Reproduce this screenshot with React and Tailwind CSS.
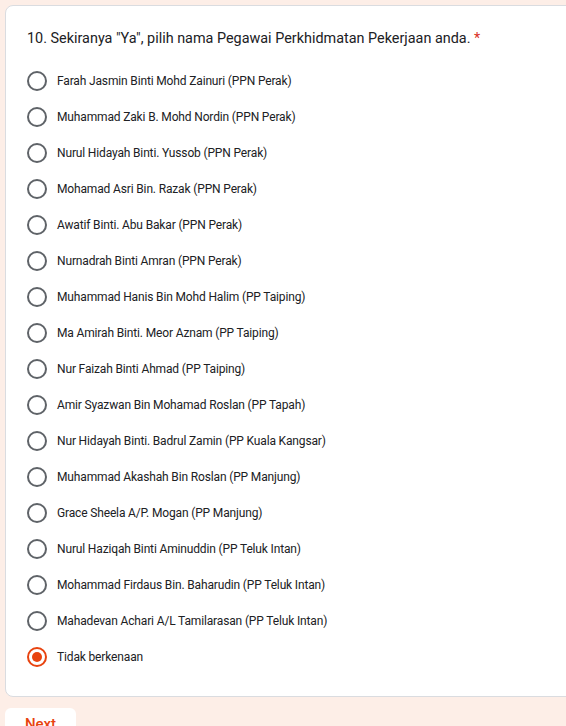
const options = [
  "Farah Jasmin Binti Mohd Zainuri (PPN Perak)",
  "Muhammad Zaki B. Mohd Nordin (PPN Perak)",
  "Nurul Hidayah Binti. Yussob (PPN Perak)",
  "Mohamad Asri Bin. Razak (PPN Perak)",
  "Awatif Binti. Abu Bakar (PPN Perak)",
  "Nurnadrah Binti Amran (PPN Perak)",
  "Muhammad Hanis Bin Mohd Halim (PP Taiping)",
  "Ma Amirah Binti. Meor Aznam (PP Taiping)",
  "Nur Faizah Binti Ahmad (PP Taiping)",
  "Amir Syazwan Bin Mohamad Roslan (PP Tapah)",
  "Nur Hidayah Binti. Badrul Zamin (PP Kuala Kangsar)",
  "Muhammad Akashah Bin Roslan (PP Manjung)",
  "Grace Sheela A/P. Mogan (PP Manjung)",
  "Nurul Haziqah Binti Aminuddin (PP Teluk Intan)",
  "Mohammad Firdaus Bin. Baharudin (PP Teluk Intan)",
  "Mahadevan Achari A/L Tamilarasan (PP Teluk Intan)",
  "Tidak berkenaan",
];

const App = () => {
  const selected = "Tidak berkenaan";
  return (
    <div className="w-[566px] h-[726px] overflow-hidden bg-[#fdeee7] pt-[5px] pl-[5px] font-['Roboto',sans-serif] text-[#202124]">
      <div className="w-[640px] bg-white rounded-lg border border-[#dadce0] pl-[21px] pt-[23px] pb-[21px]">
        <p className="text-[14.4px] leading-5">
          10. Sekiranya "Ya", pilih nama Pegawai Perkhidmatan Pekerjaan anda.{" "}
          <span className="text-[#d93025]">*</span>
        </p>
        <div className="mt-[14px] flex flex-col">
          {options.map((name) => (
            <div key={name} className="flex items-center h-9">
              {name === selected ? (
                <span className="w-5 h-5 rounded-full border-2 border-[#e8430f] flex items-center justify-center">
                  <span className="w-2.5 h-2.5 rounded-full bg-[#e8430f]"></span>
                </span>
              ) : (
                <span className="w-5 h-5 rounded-full border-2 border-[#5f6368]"></span>
              )}
              <span className="ml-[10px] text-[12px] tracking-[-0.15px]">{name}</span>
            </div>
          ))}
        </div>
      </div>
      <div className="mt-[11px] w-[71px] h-10 bg-white rounded-md flex justify-center pt-[6px] text-[#e8430f] text-[15px] leading-5 font-medium">
        Next
      </div>
    </div>
  );
};

export default App;
